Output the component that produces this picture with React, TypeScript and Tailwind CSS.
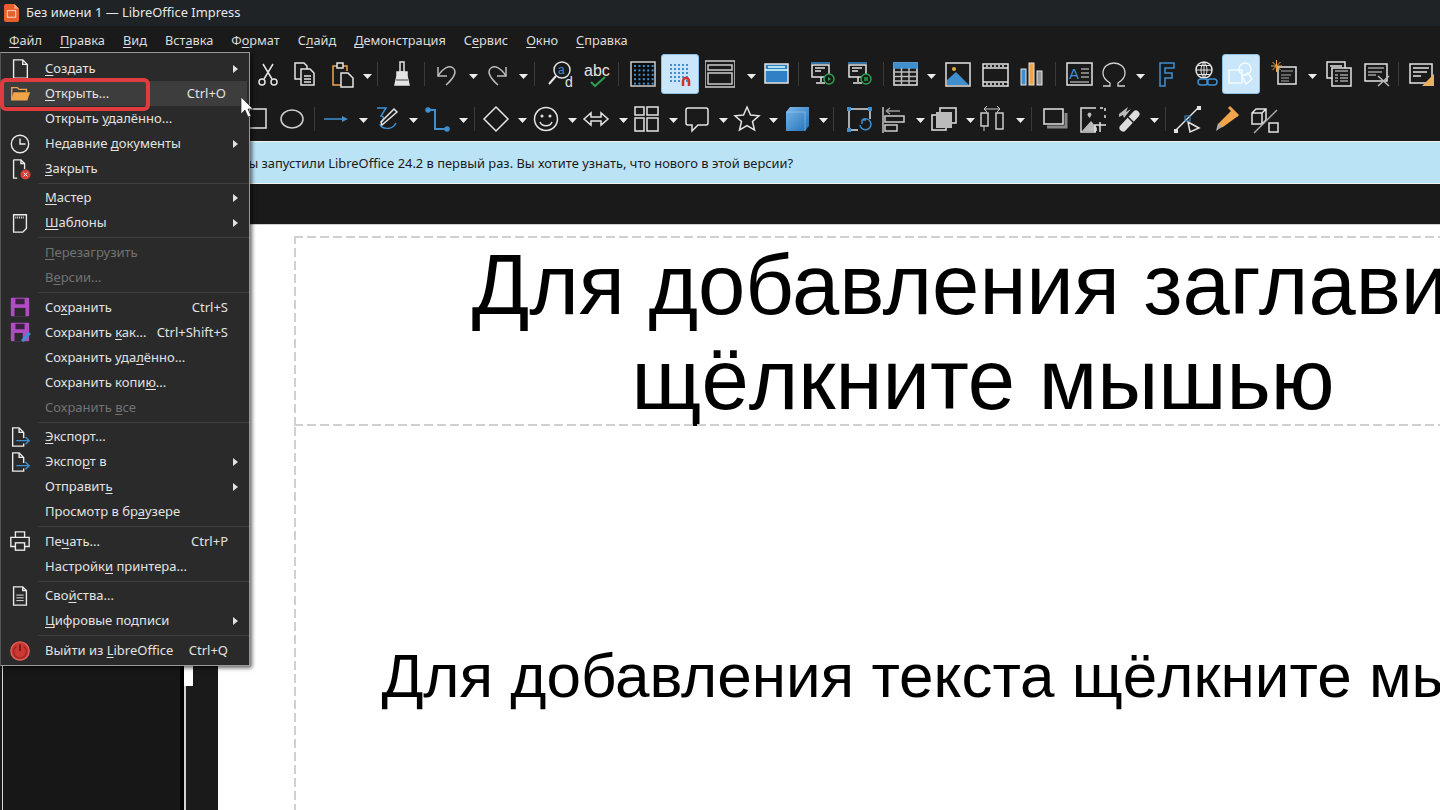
import type { ReactNode } from 'react';

const BLUE = '#3f8fcf';
const ORANGE = '#f0a54a';
const GREEN = '#2e9e4f';
const PURPLE = '#b04dc4';
const DARK = '#1a1a1a';

function dots(x0: number, y0: number, n: number, step: number, r = 1) {
  const out: ReactNode[] = [];
  for (let i = 0; i < n; i++)
    for (let j = 0; j < n; j++)
      out.push(<rect key={`${i}-${j}`} x={x0 + i * step} y={y0 + j * step} width={r * 2} height={r * 2} fill={BLUE} stroke="none" />);
  return out;
}

const toolIcons: Record<string, ReactNode> = {
  cut: (<><path d="M10 5l9 15M20 5l-9 15" /><circle cx="9" cy="23" r="3" /><circle cx="21" cy="23" r="3" /></>),
  copy: (<><path d="M11 20H5V4h9l3 3v3" /><path d="M11 10h9l4 4v12H11z" /><path d="M14 17h7M14 20h7M14 23h7" /></>),
  paste: (<><path stroke={ORANGE} d="M10 7H6v19h8M16 7h4v5" /><rect x="10" y="4" width="6" height="5" /><path d="M14 14h7l5 5v9H14z" fill={DARK} /></>),
  brush: (<><path d="M13 3h4v10h-4z" /><path d="M10 13h10v4l2 9H8l2-9z" fill="#e4e4e4" /><path d="M9 21h12" stroke="#777" /></>),
  undo: (<g stroke="#bbb"><path d="M7 8v9h9" /><path d="M7 17C12 9 18 6 22 9c4 3 2 9-7 17" /></g>),
  redo: (<g stroke="#bbb" transform="matrix(-1 0 0 1 30 0)"><path d="M7 8v9h9" /><path d="M7 17C12 9 18 6 22 9c4 3 2 9-7 17" /></g>),
  find: (<><circle cx="17" cy="11" r="8" /><path d="M11 17l-7 8" strokeWidth="2" /><text x="13" y="15" fontSize="12" fontFamily="Liberation Sans" fill={BLUE} stroke="none">a</text><text x="20" y="28" fontSize="14" fontFamily="Liberation Sans" fill="#e4e4e4" stroke="none">d</text></>),
  spell: (<><text x="3" y="17" fontSize="16" fontFamily="Liberation Sans" fill="#e4e4e4" stroke="none">abc</text><path d="M10 23l4 4 10-9" stroke={GREEN} strokeWidth="2" /></>),
  grid: (<><rect x="3" y="3" width="24" height="24" fill="#0c0c0c" stroke="#ccc" />{dots(6, 6, 5, 4.4)}</>),
  snap: (<>{dots(5, 5, 5, 4)}<path d="M18 27v-5a3 3 0 0 1 6 0v5" stroke="#d0342c" strokeWidth="2.5" /></>),
  view: (<g stroke="#ccc"><rect x="0" y="2" width="30" height="26" /><path d="M3 6h24v5H3zM3 14h24v11H3z" /></g>),
  layout: (<><rect x="3" y="5" width="23" height="19" fill="#2f80c4" /><path d="M3 11h23M6 8h17" stroke="#dff" /></>),
  show1: (<><path d="M3 4h19" stroke={BLUE} /><rect x="4" y="6" width="17" height="12" /><path d="M7 9h10M7 12h6M13 18v5M8 24h9" /><circle cx="21" cy="20" r="5" fill={DARK} stroke={GREEN} /><path d="M20 18l3 2-3 2z" fill={GREEN} stroke="none" /></>),
  show2: (<><path d="M3 4h19" stroke={BLUE} /><rect x="4" y="6" width="17" height="12" /><path d="M7 9h10M7 12h6M13 18v5M8 24h9" /><circle cx="21" cy="20" r="5" fill={DARK} stroke={GREEN} /><path d="M20 18v4M22 18v4" stroke={GREEN} /></>),
  table: (<><rect x="4" y="4" width="23" height="22" /><rect x="4" y="4" width="23" height="5" fill={BLUE} stroke={BLUE} /><path d="M4 13h23M4 17.500h23M4 22h23M11.500 9v17M19 9v17" stroke="#bbb" /></>),
  image: (<><rect x="3" y="4" width="24" height="23" /><path d="M4 26v-5l9-8 13 13z" fill={BLUE} stroke="none" /><circle cx="11" cy="10" r="2" fill="#e0b040" stroke="none" /></>),
  film: (<><rect x="3" y="5" width="25" height="22" /><path d="M3 9h25M3 23h25M6 7h2M10 7h2M14 7h2M18 7h2M22 7h2M6 25h2M10 25h2M14 25h2M18 25h2M22 25h2" /></>),
  chart: (<g strokeWidth="1"><rect x="4" y="10" width="5" height="16" fill={BLUE} /><rect x="12" y="4" width="5" height="22" fill={ORANGE} /><rect x="20" y="12" width="5" height="14" fill="#999" /></g>),
  textbox: (<><rect x="3" y="4" width="25" height="22" /><text x="5" y="20" fontSize="15" fontFamily="Liberation Sans" fill={BLUE} stroke="none">A</text><path d="M17 10h8M17 14h8M17 18h8M6 23h19" strokeWidth="1" /></>),
  omega: <path d="M4 27h7v-3C6 21 4 17 4 14 4 8 9 4 15 4s11 4 11 10c0 3-2 7-7 10v3h7" stroke="#d0d0d0" strokeWidth="1.300" />,
  fontwork: <path d="M8 4h14v5H13v5h7v5h-7v8H8z" stroke={BLUE} fill="none" />,
  link: (<><circle cx="14" cy="11" r="8" /><path d="M6 11h16M14 3v16M8 6.500h12M8 15.500h12M14 3c-4 4-4 12 0 16M14 3c4 4 4 12 0 16" strokeWidth="1" /><rect x="8" y="20" width="10" height="6" rx="3" fill={DARK} stroke={BLUE} /><rect x="17" y="20" width="10" height="6" rx="3" stroke={BLUE} /></>),
  shapes: (<g stroke="#f4fbff"><rect x="3" y="11" width="13" height="13" /><circle cx="19" cy="10" r="6" /><path d="M16 17l6-3 4 6-6 5z" /></g>),
  newslide: (<><rect x="8" y="8" width="18" height="17" /><path d="M11 12h12M11 16h10M11 19h8M11 22h8" strokeWidth="1" stroke="#aaa" /><g stroke={ORANGE} strokeWidth="1"><path d="M1 7h11M6.500 1v12M2.500 3l8 8M10.500 3l-8 8" /></g></>),
  dup: (<><rect x="3" y="3" width="18" height="16" /><path d="M6 7h12" /><rect x="8" y="9" width="19" height="18" fill={DARK} /><path d="M11 12h13M11 16h3M16 16h8M11 19h3M16 19h8M11 22h3M16 22h8" strokeWidth="1" /></>),
  del: (<><rect x="3" y="5" width="22" height="17" /><path d="M6 9h16M6 13h14M6 16h8" strokeWidth="1" /><path d="M16 17l11 10M27 17L16 27" stroke="#bbb" /></>),
  master: (<><rect x="3" y="5" width="22" height="19" /><path d="M6 9h16M6 13h14M6 17h8" /><path d="M27 15v12H15z" fill="#e8b060" stroke="none" /></>),
  rect: <rect x="3" y="5" width="20" height="19" />,
  ellipse: <ellipse cx="15" cy="15" rx="11" ry="9" stroke="#d0d0d0" />,
  line: (<><path d="M2 15h22" stroke={BLUE} /><path d="M20 12l6 3-6 3z" fill={BLUE} stroke="none" /></>),
  pen: (<><path d="M4 4h9L8 12c3 0 3 3 1 6" stroke={BLUE} /><path d="M7 20c1 5 12 7 16-1" stroke={BLUE} /><path d="M9 21l-1-3L21 5l3 3z" /></>),
  conn: (<g stroke={BLUE}><path d="M6 6h7v19h12" strokeWidth="2" /><circle cx="6" cy="6" r="2" fill={BLUE} /><circle cx="25" cy="25" r="2" fill={BLUE} /></g>),
  diamond: <path d="M15 3l12 12-12 12L3 15z" />,
  smile: (<><circle cx="15" cy="15" r="11.500" /><circle cx="11" cy="12" r="1.500" fill="#e4e4e4" stroke="none" /><circle cx="19" cy="12" r="1.500" fill="#e4e4e4" stroke="none" /><path d="M9 18c2 5 10 5 12 0" /></>),
  both: <path d="M3 15l7-6v4h10V9l7 6-7 6v-4H10v4z" />,
  flow: (<><rect x="4" y="3" width="9" height="8" /><rect x="16" y="3" width="11" height="8" /><rect x="4" y="14" width="9" height="13" /><rect x="16" y="14" width="11" height="13" /></>),
  callout: <path d="M6 4h18a2 2 0 0 1 2 2v13a2 2 0 0 1-2 2H16l-6 6v-6H6a2 2 0 0 1-2-2V6a2 2 0 0 1 2-2z" />,
  star: <path d="M15 3l3.500 8 8.500.8-6.500 5.700 2 8.500-7.500-4.500L7.500 26l2-8.500L3 11.800l8.500-.8z" />,
  cube: (<><defs><linearGradient id="cubeFront" x1="0" y1="0" x2="1" y2="1"><stop offset="0" stopColor="#7db9e8" /><stop offset="1" stopColor="#1f6fb8" /></linearGradient></defs><path d="M4 8l4-5h19v19l-4 5H4z" fill="url(#cubeFront)" stroke="none" /><path d="M4 8h19v19" stroke="#a8d4f5" strokeWidth="0.500" /></>),
  trans: (<><path d="M6 5h19M5 6v19M6 26h8M26 6v9" stroke="#ddd" /><g fill={BLUE} stroke="none"><rect x="3" y="3" width="4" height="4" /><rect x="24" y="3" width="4" height="4" /><rect x="3" y="24" width="4" height="4" /></g><path d="M18 16a5.500 5.500 0 1 1-2 5M18 16v4M18 16h4" stroke={BLUE} /></>),
  align: (<g stroke="#ccc"><path d="M5 3v26" stroke="#999" strokeWidth="2" /><rect x="7" y="12" width="19" height="6" /><rect x="7" y="21" width="12" height="6" /><path d="M8 7h14M8 7l4-3M8 7l4 3" stroke="#999" /></g>),
  arrange: (<><path d="M12 9V4h16v15h-5" /><path d="M8 11H4v15h14v-4" /><rect x="8" y="8" width="16" height="16" fill="#bbb" stroke="none" /></>),
  dist: (<g stroke="#ccc"><rect x="3" y="9" width="7" height="13" /><rect x="18" y="9" width="7" height="16" /><path d="M6 5h16M6 5l3-3M6 5l3 3M22 5l-3-3M22 5l-3 3M6 22v5" strokeWidth="1" /></g>),
  shadow: (<><path d="M7 23h19V9" stroke="#888" strokeWidth="3" /><rect x="4" y="5" width="19" height="15" fill={DARK} /></>),
  crop: (<><path d="M18 4H3v24h15" stroke="#ddd" /><path d="M4 27l9-10 6 7v3z" fill="#bbb" stroke="none" /><path d="M10 12a2 2 0 1 1 3 0l-1.500 2z" fill="#bbb" stroke="none" /><path d="M22 4h5v3M27 11v4" strokeDasharray="3 2" /><path d="M17 28v-7h11M22 28v-7M22 21v-3" /></>),
  filter: (<><path d="M6 10l9-7-2 5 5-3-7 9-1-3-4 2z" fill="#bbb" stroke="none" /><path d="M10 24L23 10" stroke="#ddd" strokeWidth="7" strokeLinecap="round" /><path d="M15 13l6 6" stroke={DARK} strokeWidth="1.500" /></>),
  points: (<><path d="M3 26L25 4" /><rect x="1" y="25" width="4" height="4" fill="#e4e4e4" stroke="none" /><rect x="24" y="2" width="4" height="4" fill="#e4e4e4" stroke="none" /><path d="M15 18l11 6-9 4z" /><rect x="12" y="12" width="5" height="5" stroke={BLUE} strokeWidth="1" /></>),
  glue: (<><path d="M11 23l-5 1 1-5 13-13 6 6z" fill={ORANGE} stroke="none" /><path d="M17 3l9 9" stroke={ORANGE} strokeWidth="3" /><path d="M6 19l4 4-6 4z" fill="#aaa" stroke="none" /></>),
  threeD: (<><path d="M2 9l4-4h10v11l-4 4H2zM2 9h10v11M12 9l4-4" /><path d="M4 29L27 6" stroke="#aaa" /><rect x="19" y="19" width="9" height="9" /></>),
};

const menuIcons: Record<string, ReactNode> = {
  page: <path d="M5 2h10l5 5v15H5zM15 2v5h5" />,
  folder: (<><path d="M3 18V5h6l2 2h8v3" stroke={ORANGE} /><path d="M2 19l3-9h18l-3 9z" fill={ORANGE} stroke="none" /></>),
  clock: (<><circle cx="12" cy="12" r="9.500" /><path d="M12 6v6h6" /></>),
  close: (<><path d="M5 2h8l4 4v6M9 22H5V2M13 2v4h4" /><circle cx="18" cy="18" r="5.500" fill="#d8403c" stroke="none" /><path d="M16 16l4 4M20 16l-4 4" stroke="#fff" strokeWidth="1" /></>),
  template: (<><path d="M5 3h14v15l-4 4H5z" /><path d="M7 6h10" strokeDasharray="1 1" strokeWidth="2" /></>),
  save: (<g stroke="none"><rect x="2" y="2" width="20" height="20" rx="1" fill={PURPLE} /><rect x="7" y="3" width="10" height="6" fill="#3a2040" /><rect x="6" y="13" width="12" height="9" fill="#2a2a2a" /></g>),
  saveas: (<g stroke="none"><rect x="2" y="2" width="20" height="20" rx="1" fill={PURPLE} /><rect x="7" y="3" width="10" height="6" fill="#3a2040" /><rect x="6" y="13" width="9" height="9" fill="#2a2a2a" /><path d="M13 21l8-9 3 2-8 9z" fill={BLUE} /></g>),
  exportDoc: (<><path d="M16 13V7l-5-5H4v20h12v-3M11 2v5h5" /><path d="M8 16h14M18 12l4 4-4 4" stroke={BLUE} /></>),
  printer: (<><path d="M7 8V2h10v6M7 18H2V8h20v10h-5" /><rect x="7" y="14" width="10" height="8" /></>),
  props: (<><path d="M5 2h10l4 4v16H5zM15 2v4h4" /><path d="M8 11h8M8 14h8M8 17h8" strokeWidth="1" /></>),
  power: (<><circle cx="12" cy="12" r="10" fill="#cc3833" stroke="#e0605a" /><path d="M12 5v7" stroke="#601010" /><path d="M8 7a7 7 0 1 0 8 0" stroke="#a02522" /></>),
};

function DropArrow({ className }: { className: string }) {
  return (
    <div className={`w-[10px] flex justify-center shrink-0 mt-[4px] ${className}`}>
      <svg viewBox="0 0 9 5" className="w-[9px] h-[5px]"><path d="M0 0h9L4.500 5z" fill="#ececec" /></svg>
    </div>
  );
}

function ToolSep({ className }: { className: string }) {
  return <div className={`w-px h-[24px] bg-[#3a3a3a] shrink-0 ${className}`} />;
}

function ToolBtn({ name, className, active }: { name: string; className: string; active?: boolean }) {
  return (
    <div className={`h-[40px] flex items-center justify-center shrink-0 ${active ? 'w-[38px] rounded-[3px] bg-[#c9e6fb] border border-[#8cc0e4]' : 'w-[28px]'} ${className}`}>
      <svg viewBox="0 0 30 30" className="w-[30px] h-[30px] shrink-0" fill="none" stroke="#e4e4e4" strokeWidth="1.500">
        {toolIcons[name]}
      </svg>
    </div>
  );
}

function Toolbar({ items, className }: { items: [string, string][]; className: string }) {
  return (
    <div className={`flex items-center ${className}`}>
      {items.map(([name, cls], i) => {
        if (name === 'a') return <DropArrow key={i} className={cls} />;
        if (name === '|') return <ToolSep key={i} className={cls} />;
        return <ToolBtn key={i} name={name} className={cls} active={name === 'snap' || name === 'shapes'} />;
      })}
    </div>
  );
}

const row1: [string, string][] = [
  ['cut', 'ml-[254px]'], ['copy', 'ml-[9px]'], ['paste', 'ml-[9px]'], ['a', 'ml-[6px]'], ['|', 'ml-[5px]'],
  ['brush', 'ml-[10px]'], ['|', 'ml-[8px]'], ['undo', 'ml-[7px]'], ['a', 'ml-[8px]'], ['redo', 'ml-[6px]'], ['a', 'ml-[6px]'], ['|', 'ml-[6px]'],
  ['find', 'ml-[11px]'], ['spell', 'ml-[8px]'], ['|', 'ml-[8px]'], ['grid', 'ml-[10px]'], ['snap', 'ml-[4px]'], ['view', 'ml-[7px]'], ['a', 'ml-[12px]'],
  ['layout', 'ml-[7px]'], ['|', 'ml-[7px]'], ['show1', 'ml-[10px]'], ['show2', 'ml-[9px]'], ['|', 'ml-[9px]'], ['table', 'ml-[7px]'], ['a', 'ml-[7px]'],
  ['image', 'ml-[8px]'], ['film', 'ml-[9px]'], ['chart', 'ml-[9px]'], ['|', 'ml-[9px]'], ['textbox', 'ml-[9px]'], ['omega', 'ml-[7px]'], ['a', 'ml-[7px]'],
  ['fontwork', 'ml-[8px]'], ['link', 'ml-[10px]'], ['shapes', 'ml-[3px]'], ['newslide', 'ml-[11px]'], ['a', 'ml-[8px]'], ['dup', 'ml-[8px]'], ['del', 'ml-[10px]'],
  ['|', 'ml-[7px]'], ['master', 'ml-[9px]'],
];

const row2: [string, string][] = [
  ['rect', 'ml-[244px]'], ['ellipse', 'ml-[6px]'], ['|', 'ml-[8px]'], ['line', 'ml-[8px]'], ['a', 'ml-[7px]'], ['pen', 'ml-[6px]'], ['a', 'ml-[6px]'],
  ['conn', 'ml-[5px]'], ['a', 'ml-[7px]'], ['|', 'ml-[6px]'], ['diamond', 'ml-[7px]'], ['a', 'ml-[7px]'], ['smile', 'ml-[5px]'], ['a', 'ml-[7px]'],
  ['both', 'ml-[5px]'], ['a', 'ml-[8px]'], ['flow', 'ml-[4px]'], ['a', 'ml-[8px]'], ['callout', 'ml-[5px]'], ['a', 'ml-[7px]'], ['star', 'ml-[5px]'], ['a', 'ml-[7px]'],
  ['cube', 'ml-[5px]'], ['a', 'ml-[7px]'], ['|', 'ml-[5px]'], ['trans', 'ml-[11px]'], ['align', 'ml-[6px]'], ['a', 'ml-[8px]'], ['arrange', 'ml-[4px]'], ['a', 'ml-[8px]'],
  ['dist', 'ml-[4px]'], ['a', 'ml-[8px]'], ['|', 'ml-[6px]'], ['shadow', 'ml-[9px]'], ['crop', 'ml-[10px]'], ['filter', 'ml-[7px]'], ['a', 'ml-[7px]'], ['|', 'ml-[6px]'],
  ['points', 'ml-[8px]'], ['glue', 'ml-[11px]'], ['threeD', 'ml-[10px]'],
];

// '&' marks the access key, like in the real menu resource
function Accel({ label }: { label: string }) {
  const at = label.indexOf('&');
  if (at < 0) return <>{label}</>;
  return (
    <>
      {label.slice(0, at)}
      <span className="underline underline-offset-[2px] decoration-1">{label[at + 1]}</span>
      {label.slice(at + 2)}
    </>
  );
}

type MenuEntry = { label?: string; icon?: string; keys?: string; sub?: boolean; off?: boolean; hl?: boolean };

const menu: MenuEntry[] = [
  { label: '&Создать', icon: 'page', sub: true },
  { label: '&Открыть...', icon: 'folder', keys: 'Ctrl+O', hl: true },
  { label: 'Открыть &удалённо...' },
  { label: 'Недавние &документы', icon: 'clock', sub: true },
  { label: '&Закрыть', icon: 'close' },
  {},
  { label: '&Мастер', sub: true },
  { label: '&Шаблоны', icon: 'template', sub: true },
  {},
  { label: '&Перезагрузить', off: true },
  { label: 'В&ерсии...', off: true },
  {},
  { label: 'Со&хранить', icon: 'save', keys: 'Ctrl+S' },
  { label: 'Сохранить &как...', icon: 'saveas', keys: 'Ctrl+Shift+S' },
  { label: 'Сохранить уда&лённо...' },
  { label: 'Сохранить копи&ю...' },
  { label: 'Сохранить &все', off: true },
  {},
  { label: '&Экспорт...', icon: 'exportDoc' },
  { label: 'Экспо&рт в', icon: 'exportDoc', sub: true },
  { label: 'Отправит&ь', sub: true },
  { label: 'Просмотр в бр&аузере' },
  {},
  { label: 'Пе&чать...', icon: 'printer', keys: 'Ctrl+P' },
  { label: 'Настройк&и принтера...' },
  {},
  { label: 'Сво&йства...', icon: 'props' },
  { label: '&Цифровые подписи', sub: true },
  {},
  { label: 'Выйти из &LibreOffice', icon: 'power', keys: 'Ctrl+Q' },
];

function FileMenu() {
  return (
    <div className="absolute left-0 top-[52px] w-[250px] h-[614px] bg-[#2a2a2a] border border-[#9a9a9a] border-l-[#555] pt-[3px] shadow-[2px_2px_4px_rgba(0,0,0,0.6)] text-[13px] text-[#e2e2e2]">
      {menu.map((m, i) => {
        if (!m.label) return <div key={i} className="h-[4.600px] flex items-center pl-[37px]"><div className="h-px w-full bg-[#3f3f3f]" /></div>;
        return (
          <div key={i} className={`h-[25px] flex items-center ${m.hl ? 'bg-[#3d3d3d] mr-[2px]' : ''} ${m.off ? 'text-[#727272]' : ''}`}>
            <div className="w-[44px] pl-[8px] shrink-0">
              {m.icon && (
                <svg viewBox="0 0 24 24" className="w-[22px] h-[22px]" fill="none" stroke="#ececec" strokeWidth="1.500">
                  {menuIcons[m.icon]}
                </svg>
              )}
            </div>
            <span className="flex-1 whitespace-nowrap"><Accel label={m.label} /></span>
            {m.keys && <span className="pr-[21px] whitespace-nowrap">{m.keys}</span>}
            {m.sub && (
              <svg viewBox="0 0 5 8" className="w-[5px] h-[8px] mr-[11px]"><path d="M0 0l5 4-5 4z" fill="#e2e2e2" /></svg>
            )}
          </div>
        );
      })}
    </div>
  );
}

const menuBar = ['&Файл', '&Правка', '&Вид', 'Вст&авка', 'Ф&ормат', 'С&лайд', '&Демонстрация', 'С&ервис', '&Окно', '&Справка'];

export default function App() {
  return (
    <div className="relative h-screen w-full overflow-hidden bg-[#1a1a1a] font-['Noto_Sans','Open_Sans',sans-serif]">
      {/* Title bar */}
      <div className="h-[26px] bg-[#1f2326] flex items-center pl-[4px] gap-[7px] text-[12.900px] text-[#e6e6e6]">
        <svg viewBox="0 0 16 19" className="w-[15px] h-[18px]">
          <path d="M2 0h9l5 5v12a2 2 0 0 1-2 2H2a2 2 0 0 1-2-2V2a2 2 0 0 1 2-2z" fill="#e8602c" />
          <path d="M11 0l5 5h-5z" fill="#f5a583" />
          <rect x="3.500" y="7" width="9" height="7" fill="none" stroke="#fbe0d4" strokeWidth="1" />
        </svg>
        <span>Без имени 1 — LibreOffice Impress</span>
      </div>

      {/* Menu bar */}
      <div className="h-[26px] flex items-center gap-[18px] pl-[9px] pt-[3px] text-[12.750px] text-[#dcdcdc]">
        {menuBar.map((m) => (
          <span key={m}><Accel label={m} /></span>
        ))}
      </div>

      <Toolbar items={row1} className="h-[44px]" />
      <Toolbar items={row2} className="h-[45px]" />

      {/* Infobar */}
      <div className="h-[43px] bg-[#bbe3f6] border-y border-[#f2f2f2] flex items-center pl-[240px] pt-[3px] text-[12.900px] text-[#1a1a1a]">
        Вы запустили LibreOffice 24.2 в первый раз. Вы хотите узнать, что нового в этой версии?
      </div>

      <div className="h-[41px] border-b border-[#cfcfcf]" />

      {/* Workspace */}
      <div className="flex h-[585px]">
        <div className="w-[218px] shrink-0 flex pl-[2px]">
          <div className="w-[178px] border-l border-[#d8d8d8] bg-[#171717]" />
          <div className="w-[4px] bg-black" />
          <div className="relative w-[34px] border-l-2 border-[#d0d0d0]">
            <div className="absolute left-[-2px] top-[400px] w-[9px] h-[61px] bg-white" />
          </div>
        </div>
        <div className="flex-1 min-w-0 overflow-hidden bg-white pl-[76px] pt-[11px] font-['Liberation_Sans',sans-serif] text-black">
          <div className="w-[1378px]">
            <div className="relative h-[190px] pt-[2px] flex items-center justify-center text-center text-[85px] leading-[95px]">
              <div className="absolute left-0 top-0 right-0 h-[2px] bg-[repeating-linear-gradient(90deg,#d0d0d0_0_9px,transparent_9px_13px)]" />
              <div className="absolute left-0 top-0 bottom-0 w-[2px] bg-[repeating-linear-gradient(0deg,#d0d0d0_0_9px,transparent_9px_13px)]" />
              <div className="absolute left-0 bottom-0 right-0 h-[2px] bg-[repeating-linear-gradient(90deg,#d0d0d0_0_9px,transparent_9px_13px)]" />
              <span className="whitespace-nowrap">Для добавления заглавия<br />щёлкните мышью</span>
            </div>
            <div className="relative h-[400px] pt-[215px] text-center text-[62px] leading-[70px] whitespace-nowrap">
              <div className="absolute left-0 top-0 bottom-0 w-[2px] bg-[repeating-linear-gradient(0deg,#d0d0d0_0_9px,transparent_9px_13px)]" />
              Для добавления текста щёлкните мышью
            </div>
          </div>
        </div>
      </div>

      <FileMenu />

      {/* Red highlight from the tutorial screenshot */}
      <div className="absolute left-0 top-[78px] w-[150px] h-[33px] rounded-[6px] border-[4px] border-[#e03c3f]" />

      {/* Mouse pointer */}
      <svg viewBox="0 0 13 21" className="absolute left-[240px] top-[97px] w-[13px] h-[21px]">
        <path d="M1 0v17l4-4 3 7 3-1-3-7h5z" fill="#fff" stroke="#222" strokeWidth="0.700" />
      </svg>
    </div>
  );
}
